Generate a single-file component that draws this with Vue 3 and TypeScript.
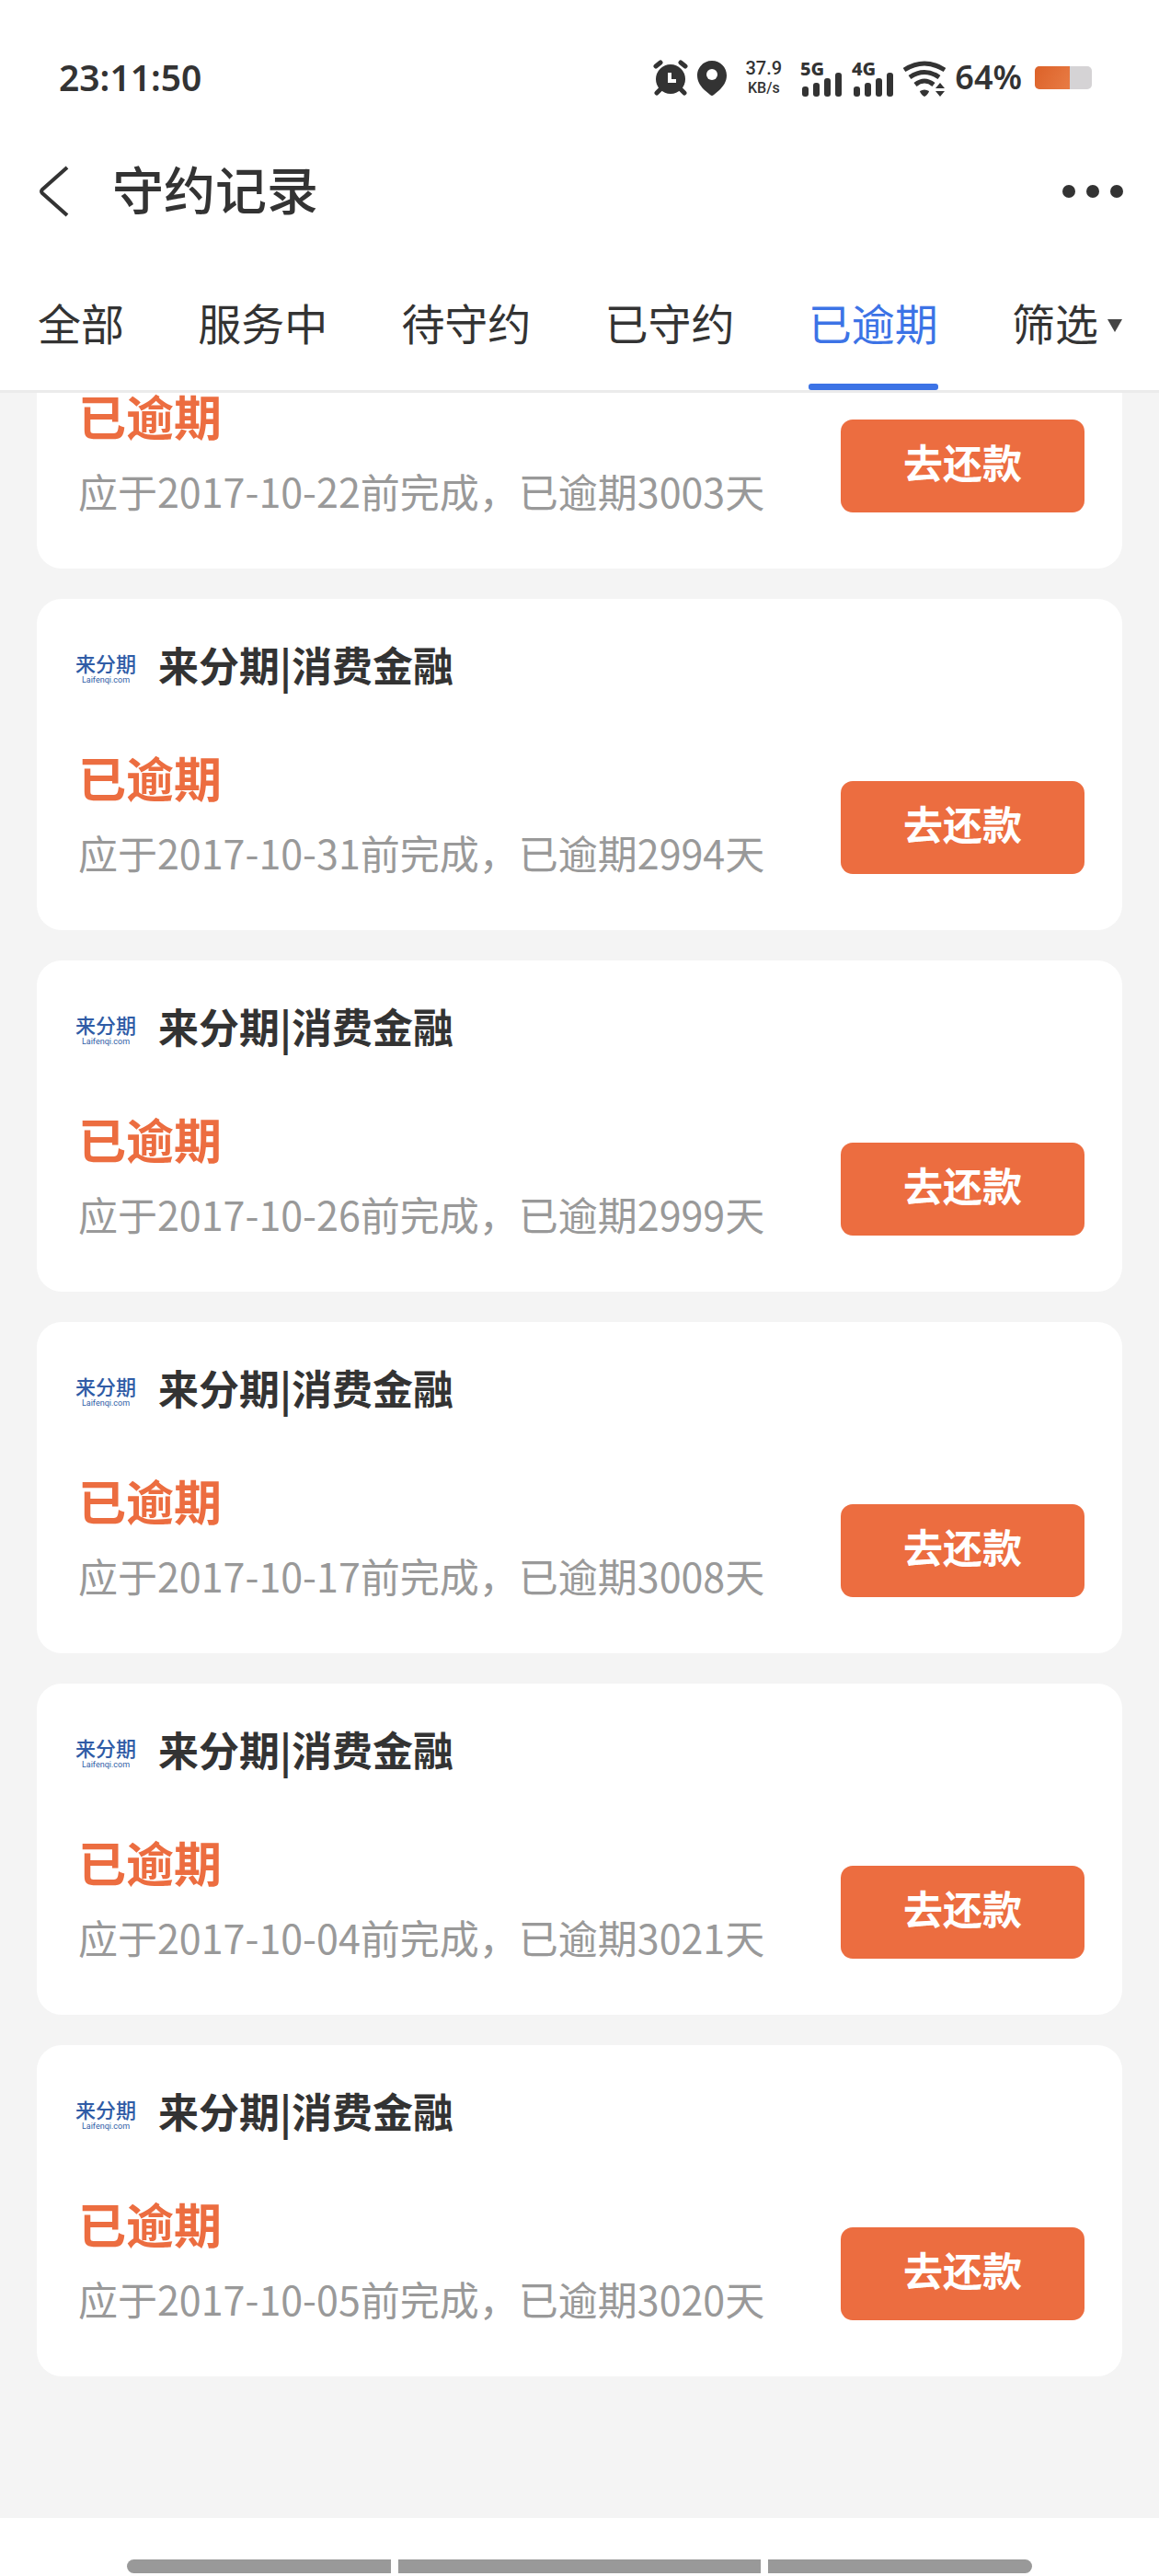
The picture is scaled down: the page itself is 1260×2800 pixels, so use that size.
<script setup lang="ts">
import { ref } from 'vue'

interface LoanRecord {
  id: number
  due: string
  days: number
}

const tabs: string[] = ['全部', '服务中', '待守约', '已守约', '已逾期', '筛选']
const active = ref('已逾期')

const records: LoanRecord[] = [
  { id: 1, due: '2017-10-22', days: 3003 },
  { id: 2, due: '2017-10-31', days: 2994 },
  { id: 3, due: '2017-10-26', days: 2999 },
  { id: 4, due: '2017-10-17', days: 3008 },
  { id: 5, due: '2017-10-04', days: 3021 },
  { id: 6, due: '2017-10-05', days: 3020 },
]
</script>

<template>
  <div class="page">
    <header class="top">
      <div class="statusbar">
        <span class="clock">23:11:50</span>
        <div class="indicators">
          <svg width="38" height="44" viewBox="0 0 38 44" aria-hidden="true">
            <g stroke="#333" stroke-width="5" stroke-linecap="round">
              <path d="M3 10l5-4M35 10l-5-4M9 34l-5 5M29 34l5 5" />
            </g>
            <circle cx="19" cy="24" r="16" fill="#333" />
            <path d="M18 17v9h7" fill="none" stroke="#fff" stroke-width="4" />
          </svg>
          <svg width="32" height="44" viewBox="0 0 32 44" aria-hidden="true">
            <path
              d="M16 4C7 4 0 11 0 20c0 7 4 12 8 16l6 5q2 2 4 0l6-5c4-4 8-9 8-16C32 11 25 4 16 4z"
              fill="#333"
            />
            <circle cx="16" cy="19" r="6" fill="#fff" />
          </svg>
          <div class="speed">
            <span class="speed-value">37.9</span>
            <span class="speed-unit">KB/s</span>
          </div>
          <svg v-for="net in ['5G', '4G']" :key="net" width="46" height="44" viewBox="0 0 46 44">
            <text x="0" y="20" class="net">{{ net }}</text>
            <g fill="#333">
              <rect x="2" y="32" width="7" height="11" rx="3" />
              <rect x="14" y="28" width="7" height="15" rx="3" />
              <rect x="26" y="23" width="7" height="20" rx="3" />
              <rect x="38" y="17" width="7" height="26" rx="3" />
            </g>
          </svg>
          <svg width="46" height="44" viewBox="0 0 46 44" aria-hidden="true">
            <g fill="none" stroke="#333" stroke-width="5">
              <path d="M1 14Q23 0 45 14" />
              <path d="M7 22Q23 11 39 22" />
              <path d="M13 30Q23 22 33 30" />
            </g>
            <path d="M18 37q5-3 10 0c0 2-4 6-5 6s-5-4-5-6z" fill="#333" />
            <path d="M35 34l5-6 5 6zM35 37h10l-5 6z" fill="#333" />
          </svg>
          <span class="percent">64%</span>
          <span class="battery"><span class="charge"></span></span>
        </div>
      </div>

      <nav class="navbar">
        <button class="icon-button" type="button" aria-label="返回">
          <svg width="34" height="56" viewBox="0 0 34 56">
            <path d="M31 2L4 26q-2 2 0 4l27 24" fill="none" stroke="#333" stroke-width="4" />
          </svg>
        </button>
        <h1>守约记录</h1>
        <button class="icon-button" type="button" aria-label="更多">
          <svg width="68" height="16" viewBox="0 0 68 16">
            <g fill="#333">
              <circle cx="8" cy="8" r="7" />
              <circle cx="34" cy="8" r="7" />
              <circle cx="60" cy="8" r="7" />
            </g>
          </svg>
        </button>
      </nav>

      <div class="tabs">
        <button
          v-for="tab in tabs"
          :key="tab"
          type="button"
          class="tab"
          :class="{ active: tab === active }"
          @click="active = tab"
        >
          {{ tab }}
          <svg v-if="tab === '筛选'" class="caret" width="16" height="14" viewBox="0 0 16 14" aria-hidden="true">
            <path d="M0 0h16L8 14z" fill="#444" />
          </svg>
        </button>
      </div>
    </header>

    <main class="list">
      <article v-for="(record, index) in records" :key="record.id" class="card" :class="{ cut: index === 0 }">
        <div v-if="index > 0" class="card-head">
          <div class="brand">
            <span class="brand-name">来分期</span>
            <span class="brand-site">Laifenqi.com</span>
          </div>
          <h2>来分期|消费金融</h2>
        </div>
        <div class="card-body">
          <div class="info">
            <strong class="state">已逾期</strong>
            <span class="detail">应于{{ record.due }}前完成，已逾期{{ record.days }}天</span>
          </div>
          <button type="button" class="pay">去还款</button>
        </div>
      </article>
    </main>

    <footer class="gesture">
      <span class="pill side left"></span>
      <span class="pill middle"></span>
      <span class="pill side right"></span>
    </footer>
  </div>
</template>

<style>
body {
  margin: 0;
  background: #f4f4f4;
}
</style>

<style scoped>
.page {
  display: flex;
  flex-direction: column;
  min-height: 100vh;
  background: #f4f4f4;
  color: #333;
  font-family: 'Noto Sans CJK SC', sans-serif;
}

button {
  padding: 0;
  border: 0;
  background: none;
  color: inherit;
  font: inherit;
  cursor: pointer;
}

svg {
  display: block;
  flex: none;
}

.top {
  background: #fff;
  border-bottom: 3px solid #ebebeb;
}

.statusbar {
  display: flex;
  align-items: center;
  justify-content: space-between;
  height: 92px;
  padding: 38px 73px 0 64px;
  font-family: 'Noto Sans', sans-serif;
  font-weight: 600;
}

.clock {
  font-size: 39px;
  line-height: 44px;
}

.indicators {
  display: flex;
  align-items: center;
  gap: 10px;
}

.speed {
  display: flex;
  flex-direction: column;
  align-items: center;
  width: 40px;
  margin: 0 10px;
  font-family: Roboto, sans-serif;
  font-weight: 500;
}

.speed-value {
  font-size: 20px;
  line-height: 24px;
}

.speed-unit {
  font-size: 16px;
  line-height: 20px;
}

.net {
  font-size: 20px;
  font-weight: 800;
  fill: #333;
}

.percent {
  font-size: 36px;
  line-height: 44px;
}

.battery {
  width: 62px;
  height: 25px;
  margin-left: 4px;
  border-radius: 5px;
  overflow: hidden;
  background: #d5d3d5;
}

.charge {
  display: block;
  width: 62%;
  height: 100%;
  background: linear-gradient(120deg, #dc6128, #e87c45);
}

.navbar {
  display: flex;
  align-items: center;
  height: 156px;
  padding: 0 38px 0 42px;
}

.navbar h1 {
  flex: 1;
  margin: 0 0 0 46px;
  padding-bottom: 8px;
  font-size: 56px;
  font-weight: 500;
  line-height: 64px;
}

.tabs {
  display: flex;
  justify-content: space-between;
  height: 138px;
  padding: 0 40px 0 41px;
}

.tab {
  display: flex;
  position: relative;
  align-items: center;
  gap: 10px;
  padding-bottom: 12px;
  font-size: 47px;
}

.caret {
  margin-top: 10px;
}

.tab.active {
  color: #3c73e6;
}

.tab.active::after {
  content: '';
  position: absolute;
  right: 0;
  bottom: 0;
  left: 0;
  height: 7px;
  border-radius: 3px;
  background: #3c73e6;
}

.list {
  display: flex;
  flex: 1;
  flex-direction: column;
  gap: 33px;
  padding: 0 40px 154px;
}

.card {
  border-radius: 27px;
  background: #fff;
}

.card.cut {
  border-radius: 0 0 27px 27px;
}

.card-head {
  display: flex;
  align-items: center;
  gap: 22px;
  height: 70px;
  padding: 36px 40px 63px;
}

.brand {
  display: flex;
  flex-direction: column;
  align-items: center;
  justify-content: flex-end;
  width: 70px;
  height: 46px;
  color: #2f5ca6;
}

.brand-name {
  font-size: 22px;
  font-weight: 500;
  line-height: 26px;
}

.brand-site {
  font-family: Roboto, sans-serif;
  font-size: 9px;
  line-height: 12px;
}

.card-head h2 {
  margin: 0;
  font-size: 44px;
  font-weight: 700;
  line-height: 48px;
}

.card-body {
  display: flex;
  align-items: flex-end;
  justify-content: space-between;
  padding: 0 41px 61px 45px;
}

.info {
  display: flex;
  flex-direction: column;
  gap: 32px;
}

.state {
  color: #ec6d40;
  font-size: 52px;
  font-weight: 700;
  line-height: 50px;
}

.detail {
  color: #999;
  font-size: 43px;
  line-height: 48px;
}

.pay {
  width: 265px;
  height: 101px;
  padding-bottom: 12px;
  border-radius: 13px;
  background: #ec6d40;
  color: #fff;
  font-size: 43px;
  font-weight: 700;
}

.gesture {
  display: flex;
  gap: 8px;
  padding: 45px 138px 3px;
  background: #fff;
}

.pill {
  height: 15px;
  background: #999;
}

.side {
  flex: 287;
}

.middle {
  flex: 394;
}

.left {
  border-radius: 8px 0 0 8px;
}

.right {
  border-radius: 0 8px 8px 0;
}
</style>
